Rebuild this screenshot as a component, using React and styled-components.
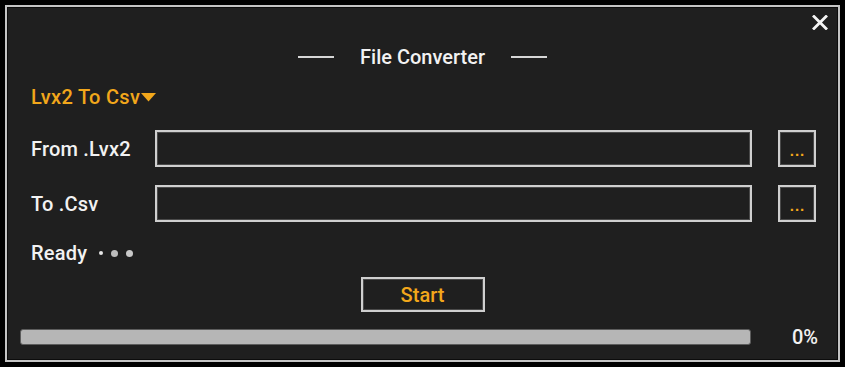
import styled, { createGlobalStyle } from "styled-components";

const GlobalStyle = createGlobalStyle`
  html, body {
    margin: 0;
    padding: 0;
    background: #000;
  }
  body {
    font-family: Roboto, "Liberation Sans", Arial, sans-serif;
  }
`;

const ORANGE = "#f2a71b";

export default function App() {
  return (
    <>
      <GlobalStyle />
      <Screen>
        <Panel>
          <TopBar>
            <CloseButton aria-label="close">
              <svg width="16" height="15" viewBox="0 0 16 15">
                <path
                  d="M2 1.5 L14 13.5 M14 1.5 L2 13.5"
                  stroke="#f4f4f4"
                  strokeWidth="2.8"
                  strokeLinecap="square"
                />
              </svg>
            </CloseButton>
          </TopBar>

          <TitleRow>
            <Rule />
            <Title>File Converter</Title>
            <Rule />
          </TitleRow>

          <ModeRow>
            <ModeSelect>
              Lvx2 To Csv
              <svg width="15" height="9" viewBox="0 0 15 9">
                <path d="M0 0 H15 L7.5 8.5 Z" fill={ORANGE} />
              </svg>
            </ModeSelect>
          </ModeRow>

          <FileRow>
            <Label>From .Lvx2</Label>
            <PathInput />
            <BrowseButton>...</BrowseButton>
          </FileRow>

          <FileRow $top={18}>
            <Label>To .Csv</Label>
            <PathInput />
            <BrowseButton>...</BrowseButton>
          </FileRow>

          <StatusRow>
            <Label as="span">Ready</Label>
            <Dots>
              <Dot $size={4} $color="#e6e6e6" />
              <Dot $size={7} $color="#bdbdbd" />
              <Dot $size={7} $color="#c8c8c8" />
            </Dots>
          </StatusRow>

          <ActionRow>
            <StartButton>Start</StartButton>
          </ActionRow>

          <ProgressRow>
            <ProgressTrack>
              <ProgressFill style={{ width: "0%" }} />
            </ProgressTrack>
            <Percent>0%</Percent>
          </ProgressRow>
        </Panel>
      </Screen>
    </>
  );
}

const Screen = styled.div`
  width: 845px;
  height: 367px;
  padding: 5px;
  box-sizing: border-box;
  background: #000;
`;

const Panel = styled.div`
  height: 357px;
  box-sizing: border-box;
  border: 2px solid #c4c4c4;
  box-shadow: inset 0 0 0 1px #0c0c0c;
  background: #1f1f1f;
  display: flex;
  flex-direction: column;
`;

const TopBar = styled.div`
  height: 30px;
  box-sizing: border-box;
  padding: 8px 10px 0 0;
  display: flex;
  justify-content: flex-end;
  align-items: flex-start;
`;

const CloseButton = styled.button`
  width: 16px;
  height: 15px;
  padding: 0;
  border: none;
  background: none;
  display: flex;
  cursor: pointer;
`;

const TitleRow = styled.div`
  height: 40px;
  display: flex;
  align-items: center;
  justify-content: center;
  gap: 26px;
`;

const Rule = styled.div`
  width: 36px;
  height: 2px;
  background: #d6d6d6;
`;

const Title = styled.div`
  color: #f2f2f2;
  font-size: 20px;
  font-weight: 500;
`;

const ModeRow = styled.div`
  height: 40px;
  padding-left: 24px;
  display: flex;
  align-items: center;
`;

const ModeSelect = styled.div`
  display: flex;
  align-items: center;
  gap: 1px;
  color: ${ORANGE};
  font-size: 20px;
  font-weight: 500;
  letter-spacing: 0.3px;
  cursor: pointer;
  svg {
    margin-top: 1px;
  }
`;

const FileRow = styled.div`
  margin-top: ${(p) => p.$top ?? 13}px;
  height: 37px;
  padding: 0 22px 0 24px;
  display: flex;
  align-items: center;
`;

const Label = styled.div`
  width: 124px;
  color: #f2f2f2;
  font-size: 20px;
  font-weight: 500;
  letter-spacing: 0.2px;
`;

const PathInput = styled.div`
  flex: 1;
  height: 37px;
  box-sizing: border-box;
  border: 2px solid #cfcfcf;
  box-shadow: inset 0 0 0 1px #4a4a4a;
  background: #1f1f1f;
`;

const BrowseButton = styled.button`
  margin-left: 26px;
  width: 38px;
  height: 37px;
  box-sizing: border-box;
  border: 2px solid #cfcfcf;
  box-shadow: inset 0 0 0 1px #4a4a4a;
  background: #1f1f1f;
  color: ${ORANGE};
  font-family: "Liberation Sans", Arial, sans-serif;
  font-size: 15px;
  font-weight: 700;
  letter-spacing: 1px;
  padding: 0 0 7px 1px;
  display: flex;
  align-items: flex-end;
  justify-content: center;
  line-height: 1;
`;

const StatusRow = styled.div`
  margin-top: 20px;
  height: 22px;
  padding-left: 24px;
  display: flex;
  align-items: center;

  span {
    width: auto;
  }
`;

const Dots = styled.div`
  margin-left: 12px;
  display: flex;
  align-items: center;
  gap: 8px;
`;

const Dot = styled.i`
  width: ${(p) => p.$size}px;
  height: ${(p) => p.$size}px;
  border-radius: 50%;
  background: ${(p) => p.$color};
`;

const ActionRow = styled.div`
  margin-top: 13px;
  display: flex;
  justify-content: center;
`;

const StartButton = styled.button`
  width: 124px;
  height: 35px;
  box-sizing: border-box;
  border: 2px solid #cfcfcf;
  box-shadow: inset 0 0 0 1px #4a4a4a;
  background: #1f1f1f;
  color: ${ORANGE};
  font-family: Roboto, "Liberation Sans", Arial, sans-serif;
  font-size: 20px;
  font-weight: 500;
  cursor: pointer;
`;

const ProgressRow = styled.div`
  margin-top: 17px;
  height: 16px;
  padding-left: 13px;
  display: flex;
  align-items: center;
`;

const ProgressTrack = styled.div`
  width: 731px;
  height: 16px;
  box-sizing: border-box;
  border: 1px solid #5c5c5c;
  border-radius: 3px;
  background: #b6b6b6;
  overflow: hidden;
`;

const ProgressFill = styled.div`
  height: 100%;
  background: ${ORANGE};
`;

const Percent = styled.div`
  flex: 1;
  padding-right: 20px;
  text-align: right;
  color: #f2f2f2;
  font-size: 20px;
  font-weight: 500;
`;
